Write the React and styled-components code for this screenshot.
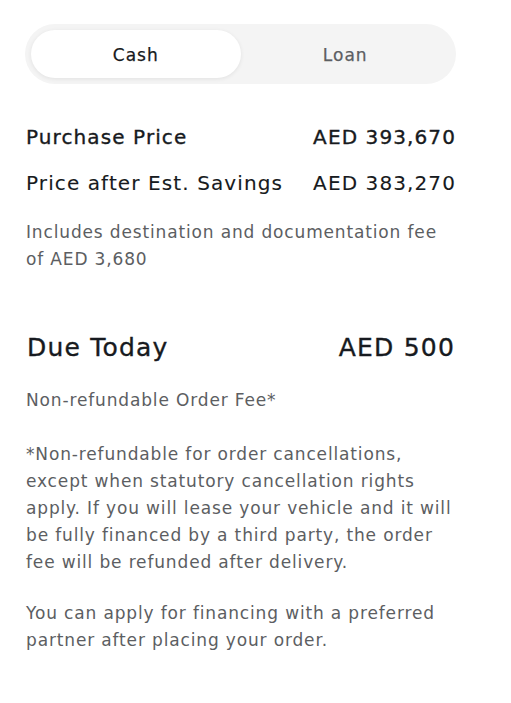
import styled, { createGlobalStyle } from "styled-components"
import React, { useState } from "react";

const GlobalStyle = createGlobalStyle`
    body {
        margin: 0;
        background: #fff;
        font-family: "DejaVu Sans", "Liberation Sans", sans-serif;
        color: #171a20;
    }
`

const Container = styled.div`
    width: 431px;
    padding: 24px 0 40px 25px;
`
const Toggle = styled.div`
    display: flex;
    height: 60px;
    padding: 6px;
    box-sizing: border-box;
    border-radius: 30px;
    background: #f4f4f4;
`
const ToggleButton = styled.button`
    flex: 1;
    border: none;
    border-radius: 24px;
    padding-top: 3px;
    font-family: inherit;
    font-size: 17px;
    letter-spacing: 1px;
    -webkit-text-stroke: 0.25px currentColor;
    cursor: pointer;
    color: ${p => p.$active ? "#171a20" : "#5c5e62"};
    background: ${p => p.$active ? "#fff" : "transparent"};
    box-shadow: ${p => p.$active ? "0 1px 4px rgba(0,0,0,0.08)" : "none"};
`
const PriceRows = styled.div`
    display: flex;
    flex-direction: column;
    gap: 20px;
    margin-top: 40px;
    padding-left: 1px;
`
const Row = styled.div`
    display: flex;
    justify-content: space-between;
    align-items: center;
    font-size: ${p => p.$big ? "25px" : "20px"};
    letter-spacing: ${p => p.$big ? "1.2px" : "1.1px"};
    -webkit-text-stroke: ${p => p.$strong ? "0.35px" : "0.1px"} currentColor;
    line-height: 26px;
`
const Note = styled.p`
    margin: ${p => p.$mt || "0"} 0 0 1px;
    font-size: 17px;
    letter-spacing: 0.85px;
    line-height: 27px;
    color: #5c5e62;
`
const DueRow = styled(Row)`
    margin-top: 62px;
    padding: 0 1px 0 2px;
`

const App = () => {
    const [mode, setMode] = useState("cash")

    return (
        <Container>
            <GlobalStyle />
            <Toggle>
                <ToggleButton $active={mode === "cash"} onClick={() => setMode("cash")}>Cash</ToggleButton>
                <ToggleButton $active={mode === "loan"} onClick={() => setMode("loan")}>Loan</ToggleButton>
            </Toggle>
            <PriceRows>
                <Row $strong>
                    <span>Purchase Price</span>
                    <span>AED 393,670</span>
                </Row>
                <Row>
                    <span>Price after Est. Savings</span>
                    <span>AED 383,270</span>
                </Row>
            </PriceRows>
            <Note $mt="23px">Includes destination and documentation fee of AED 3,680</Note>
            <DueRow $big $strong>
                <span>Due Today</span>
                <span>AED 500</span>
            </DueRow>
            <Note $mt="26px">Non-refundable Order Fee*</Note>
            <Note $mt="27px">*Non-refundable for order cancellations, except when statutory cancellation rights apply. If you will lease your vehicle and it will be fully financed by a third party, the order fee will be refunded after delivery.</Note>
            <Note $mt="24px">You can apply for financing with a preferred partner after placing your order.</Note>
        </Container>
    )
}

export default App
